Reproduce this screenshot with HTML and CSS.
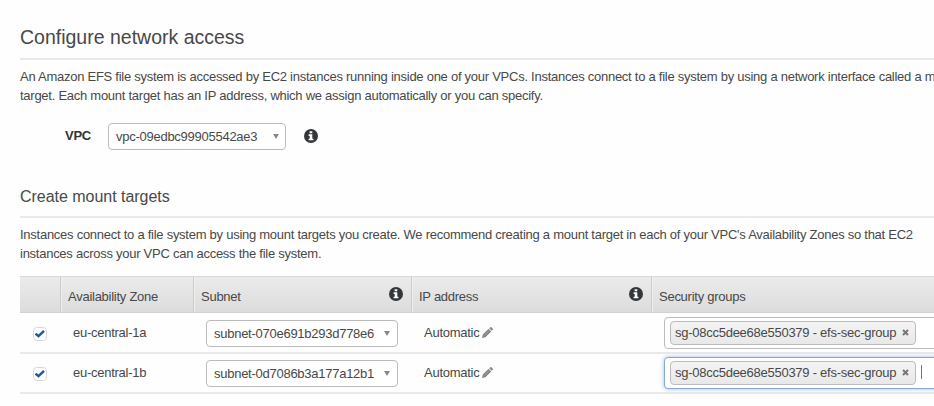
FILE: index.html
```html
<!DOCTYPE html>
<html lang="en">
<head>
<meta charset="utf-8">
<title>Configure network access</title>
<link rel="stylesheet" href="styles.css">
</head>
<body>
<svg class="defs" aria-hidden="true">
  <symbol id="info" viewBox="0 0 14 14"><circle cx="7" cy="7" r="7" fill="#333739"/><path d="M5.6 2.2h2.7v2H5.6zM4.6 5.3h3.7v4.4h1.1v1.6H4.6V9.7h1.1V6.9H4.6z" fill="#fff"/></symbol>
  <symbol id="pencil" viewBox="0 0 11 11"><path d="M0 11l.8-3.4 5.8-5.8 2.6 2.6-5.8 5.8zM7.2 1.2L8 .4q.8-.7 1.6 0l1 1q.7.8 0 1.600l-.8.8z" fill="#858585"/><path d="M2.200 8.400l4.700-4.700" stroke="#bbb" stroke-width=".6"/></symbol>
  <symbol id="check" viewBox="0 0 14 14"><rect x=".5" y=".5" width="13" height="13" rx="3.500" fill="#fff" stroke="#d5d9e2"/><path d="M2.500 6.600l3 2.600L11 3.800" fill="none" stroke="#2055a4" stroke-width="2.400"/></symbol>
  <symbol id="remove" viewBox="0 0 7 7"><path d="M1 1l5 5M6 1L1 6" stroke="#777" stroke-width="2"/></symbol>
</svg>
<main class="page">
  <h1 class="title"><span>Configure network access</span></h1>
  <p class="copy intro">An Amazon EFS file system is accessed by EC2 instances running inside one of your VPCs. Instances connect to a file system by using a network interface called a m<br>target. Each mount target has an IP address, which we assign automatically or you can specify.</p>
  <div class="vpc">
    <span class="label">VPC</span>
    <div class="select vpc-select"><span>vpc-09edbc99905542ae3</span><i class="arrow"></i></div>
    <svg class="info"><use href="#info"/></svg>
  </div>
  <h2 class="subtitle"><span>Create mount targets</span></h2>
  <p class="copy about">Instances connect to a file system by using mount targets you create. We recommend creating a mount target in each of your VPC's Availability Zones so that EC2<br>instances across your VPC can access the file system.</p>
  <section class="table">
    <div class="row head">
      <div class="th"></div>
      <div class="th">Availability Zone</div>
      <div class="th">Subnet<svg class="info"><use href="#info"/></svg></div>
      <div class="th">IP address<svg class="info"><use href="#info"/></svg></div>
      <div class="th">Security groups</div>
    </div>
    <div class="row">
      <div class="pick"><svg class="check"><use href="#check"/></svg></div>
      <div class="zone">eu-central-1a</div>
      <div class="subnet"><div class="select"><span>subnet-070e691b293d778e6</span><i class="arrow"></i></div></div>
      <div class="ip">Automatic<svg class="pencil"><use href="#pencil"/></svg></div>
      <div class="groups"><div class="field"><span class="tag"><span>sg-08cc5dee68e550379 - efs-sec-group</span><svg class="remove"><use href="#remove"/></svg></span></div></div>
    </div>
    <div class="row">
      <div class="pick"><svg class="check"><use href="#check"/></svg></div>
      <div class="zone">eu-central-1b</div>
      <div class="subnet"><div class="select"><span>subnet-0d7086b3a177a12b1</span><i class="arrow"></i></div></div>
      <div class="ip">Automatic<svg class="pencil"><use href="#pencil"/></svg></div>
      <div class="groups"><div class="field focused"><span class="tag"><span>sg-08cc5dee68e550379 - efs-sec-group</span><svg class="remove"><use href="#remove"/></svg></span><i class="caret"></i></div></div>
    </div>
  </section>
</main>
</body>
</html>
```

FILE: styles.css
```css
* { box-sizing: border-box; }
body { margin: 0; overflow: hidden; background: #fefefe; color: #484848; font: 13px/19px "Liberation Sans", Arial, sans-serif; letter-spacing: -0.26px; }
h1, h2, p { margin: 0; font-weight: normal; white-space: nowrap; }
svg { display: block; flex: none; }
.defs { display: none; }
.page { width: 934px; height: 406px; padding-left: 20px; overflow: hidden; }
.title { height: 60px; padding-top: 25px; border-bottom: 2px solid #e9e9e9; font-size: 19.5px; line-height: 24px; letter-spacing: 0; }
.intro { margin-top: 7px; }
.vpc { display: flex; align-items: center; height: 27px; margin-top: 18px; padding-left: 45px; }
.label { width: 43px; margin-top: -2px; font-weight: bold; color: #333; }
.select { display: flex; align-items: center; justify-content: space-between; width: 192px; height: 27px; padding: 0 7px; border: 1px solid #bbb; border-radius: 4px; background: #fff; white-space: nowrap; }
.vpc-select { width: 178px; margin-right: 18px; padding-right: 6px; }
.arrow { border: 3px solid transparent; border-top: 5px solid #888; border-bottom: 0; }
.info { width: 14px; height: 14px; }
.vpc .info { margin-top: -2px; }
.subtitle { height: 68px; padding-top: 36px; border-bottom: 2px solid #e9e9e9; font-size: 16px; line-height: 22px; letter-spacing: -0.03px; }
.about { margin-top: 7px; }
.table { margin-top: 13px; }
.row { display: grid; grid-template-columns: 40px 133px 218px 240px 283px; align-items: center; height: 40px; border-bottom: 2px solid #e9e9e9; }
.head { height: 37px; margin-bottom: 1px; border-top: 1px solid #d8d8d8; border-bottom: 1px solid #d2d2d2; background: linear-gradient(#ebebeb, #dcdcdc); }
.th { display: flex; align-items: center; justify-content: space-between; height: 35px; padding: 4px 8px 0 7px; border-left: 1px solid #cbcbcb; box-shadow: inset 1px 0 #f0f0f0; }
.th:first-child { border: 0; box-shadow: none; }
.th .info { margin-top: -5px; }
.pick { padding: 2px 0 0 13px; }
.check { width: 14px; height: 14px; }
.zone { padding: 0 0 2px 13px; }
.subnet { padding: 0 0 0 13px; }
.ip { display: flex; align-items: center; gap: 3px; padding: 0 0 2px 13px; }
.pencil { width: 11px; height: 11px; }
.groups { padding-left: 13px; }
.field { display: flex; align-items: center; width: 290px; height: 32px; padding-left: 5px; border: 1px solid #bbb; border-radius: 4px; background: #fff; }
.focused { border-color: #88a9d5; box-shadow: 0 0 4px #9ebce4; }
.tag { display: flex; align-items: center; justify-content: space-between; width: 246px; height: 24px; padding: 0 6px 1px 4px; border: 1px solid #bbb; border-radius: 4px; background: linear-gradient(#f4f4f4, #e8e8e8); white-space: nowrap; }
.remove { width: 7px; height: 7px; }
.caret { width: 1px; height: 14px; margin: -3px 0 0 5px; background: #777; }
```
